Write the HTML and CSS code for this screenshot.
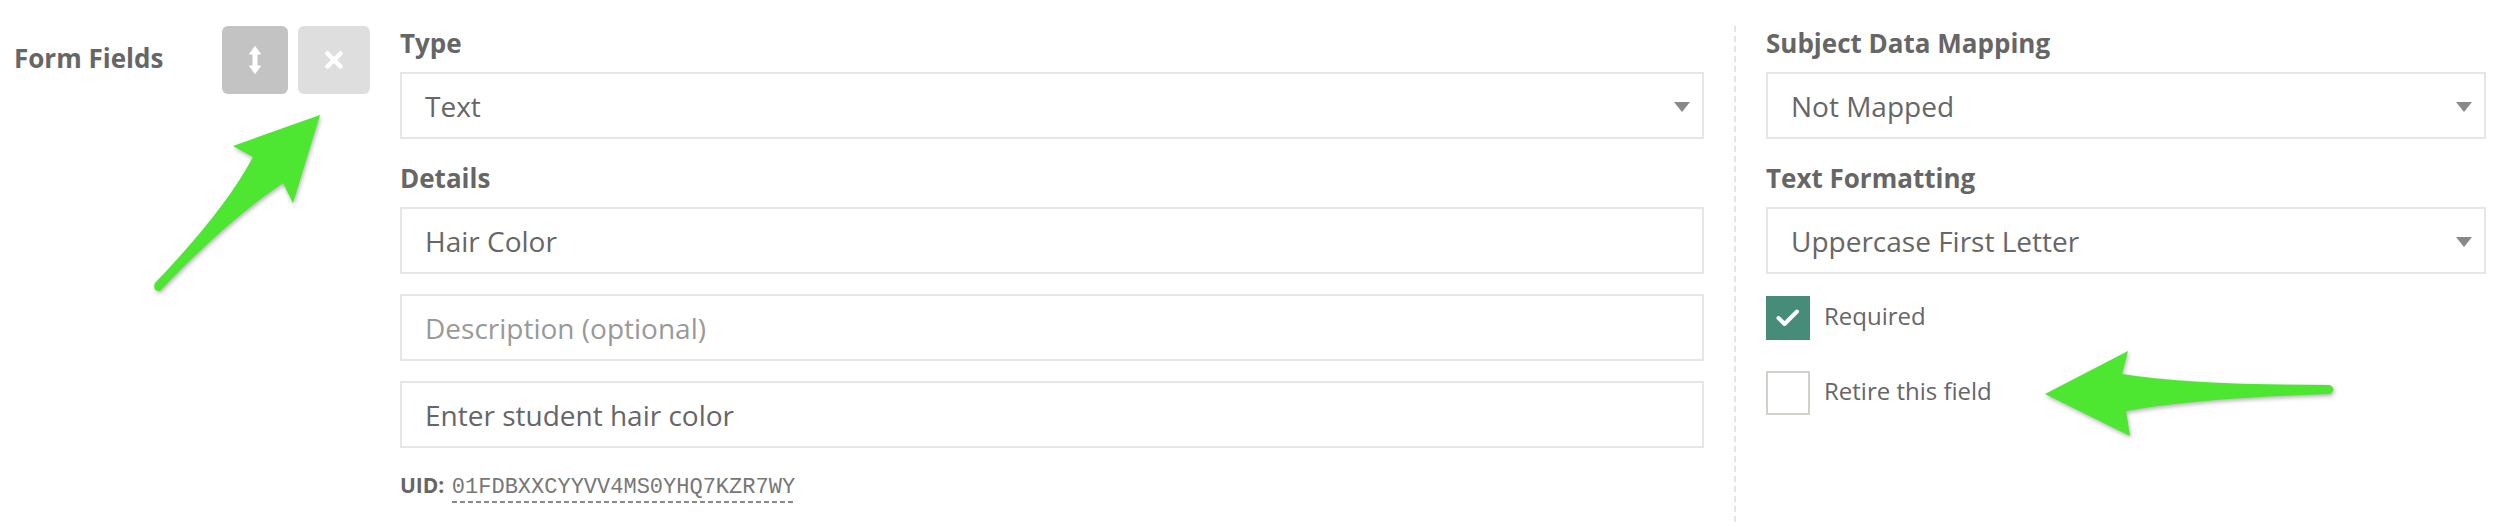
FILE: index.html
```html
<!DOCTYPE html>
<html lang="en">
<head>
    <meta charset="UTF-8">
    <meta name="viewport" content="width=device-width, initial-scale=1.0">
    <title>Form Fields</title>
    <link rel="stylesheet" href="styles.css">
</head>
<body>
    <div class="field-row">
        <div class="side">
            <div class="side-title">Form Fields</div>
            <div class="tools">
                <button class="tool tool-move" title="Move">
                    <svg width="12" height="28" viewBox="0 0 12 28"><path d="M6 0.5 L11.5 8 H8 V20 H11.5 L6 27.5 L0.5 20 H4 V8 H0.5 Z" fill="#fff" stroke="#fff" stroke-width="1" stroke-linejoin="round"/></svg>
                </button>
                <button class="tool tool-remove" title="Remove">
                    <svg width="18" height="18" viewBox="0 0 18 18"><path d="M2.5 2.5 L15.5 15.5 M15.5 2.5 L2.5 15.5" stroke="#fff" stroke-width="4.5" stroke-linecap="round"/></svg>
                </button>
            </div>
        </div>

        <div class="main">
            <label class="label">Type</label>
            <div class="select"><span>Text</span><span class="caret"></span></div>

            <label class="label spaced">Details</label>
            <input class="input" type="text" value="Hair Color">
            <input class="input" type="text" placeholder="Description (optional)">
            <input class="input last" type="text" value="Enter student hair color">

            <div class="uid"><b>UID:</b> <span class="uid-code">01FDBXXCYYVV4MS0YHQ7KZR7WY</span></div>
        </div>

        <div class="divider"></div>

        <div class="aside">
            <label class="label">Subject Data Mapping</label>
            <div class="select"><span>Not Mapped</span><span class="caret"></span></div>

            <label class="label spaced">Text Formatting</label>
            <div class="select"><span>Uppercase First Letter</span><span class="caret"></span></div>

            <div class="check first">
                <span class="box on">
                    <svg width="24" height="20" viewBox="0 0 24 20"><path d="M2.5 10 L8.5 16 L21 3.5" fill="none" stroke="#fff" stroke-width="4" stroke-linecap="round" stroke-linejoin="round"/></svg>
                </span>
                <span class="check-text">Required</span>
            </div>
            <div class="check">
                <span class="box"></span>
                <span class="check-text">Retire this field</span>
            </div>
        </div>
    </div>

    <!-- annotation arrows drawn over the page -->
    <svg class="callouts" width="2510" height="526" viewBox="0 0 2510 526">
        <path d="M320 115 L233 146 L253 157 Q225 210 155 283 Q152 291 160 291 Q225 222 283 183 L293 203 Z" />
        <path d="M2045 394 L2128 351 L2122 374 Q2190 385 2330 385 Q2337 389 2330 394 Q2200 398 2126 411 L2130 436 Z" />
    </svg>
</body>
</html>
```

FILE: styles.css
```css
body { margin: 0; background: #fff; color: #666; font-family: "Open Sans", "Liberation Sans", sans-serif; }

.field-row { display: flex; height: 526px; box-sizing: border-box; padding: 26px 0 0 14px; }

.side { display: flex; flex: 0 0 356px; align-items: flex-start; }
.side-title { width: 208px; margin-top: 15px; font-size: 26px; font-weight: 700; line-height: 34px; }
.tools { display: flex; gap: 10px; }
.tool { display: flex; align-items: center; justify-content: center; width: 66px; height: 68px; padding: 0; border: 0; border-radius: 6px; }
.tool-move { background: #c3c3c3; }
.tool-remove { width: 72px; background: #dedede; }

.main { display: flex; flex-direction: column; flex: 0 0 1304px; margin-left: 30px; }
.aside { display: flex; flex-direction: column; flex: 0 0 720px; margin-left: 30px; }

.divider { flex: 0 0 2px; margin-left: 30px; background: repeating-linear-gradient(to bottom, #e4e4e4 0 6px, transparent 6px 10px); }

.label { display: block; margin-bottom: 12px; font-size: 26px; font-weight: 700; line-height: 34px; }
.label.spaced { margin-top: 22px; }

.select, .input { box-sizing: border-box; height: 67px; border: 2px solid #e6e6e6; color: #666; font-family: inherit; font-size: 28px; }
.select { display: flex; align-items: center; justify-content: space-between; padding: 0 12px 0 23px; }
.caret { width: 0; height: 0; margin-top: 2px; border-left: 8px solid transparent; border-right: 8px solid transparent; border-top: 10px solid #888; }

.input { width: 100%; margin: 0 0 20px; padding: 0 23px; outline: none; background: #fff; }
.input::placeholder { color: #999; }
.input.last { margin-bottom: 0; }

.uid { margin-top: 22px; font-size: 21px; line-height: 30px; }
.uid b { color: #666; }
.uid-code { margin-left: 2px; color: #777; font-family: "Liberation Mono", monospace; font-size: 22px; padding-bottom: 3px;
    background: linear-gradient(to right, #8a8a8a 60%, transparent 0) left bottom / 8px 2px repeat-x; }

.check { display: flex; align-items: center; gap: 14px; margin-top: 31px; font-size: 24px; }
.check.first { margin-top: 22px; }
.box { display: flex; align-items: center; justify-content: center; box-sizing: border-box; width: 44px; height: 44px; border: 2px solid #d3d0cb; background: #fff; }
.box.on { border-color: #468c79; background: #468c79; }
.check-text { margin-bottom: 6px; }

.callouts { position: absolute; top: 0; left: 0; pointer-events: none; }
.callouts path { fill: #4de731; filter: drop-shadow(1px 2px 2px rgba(0, 0, 0, 0.3)); }
```
